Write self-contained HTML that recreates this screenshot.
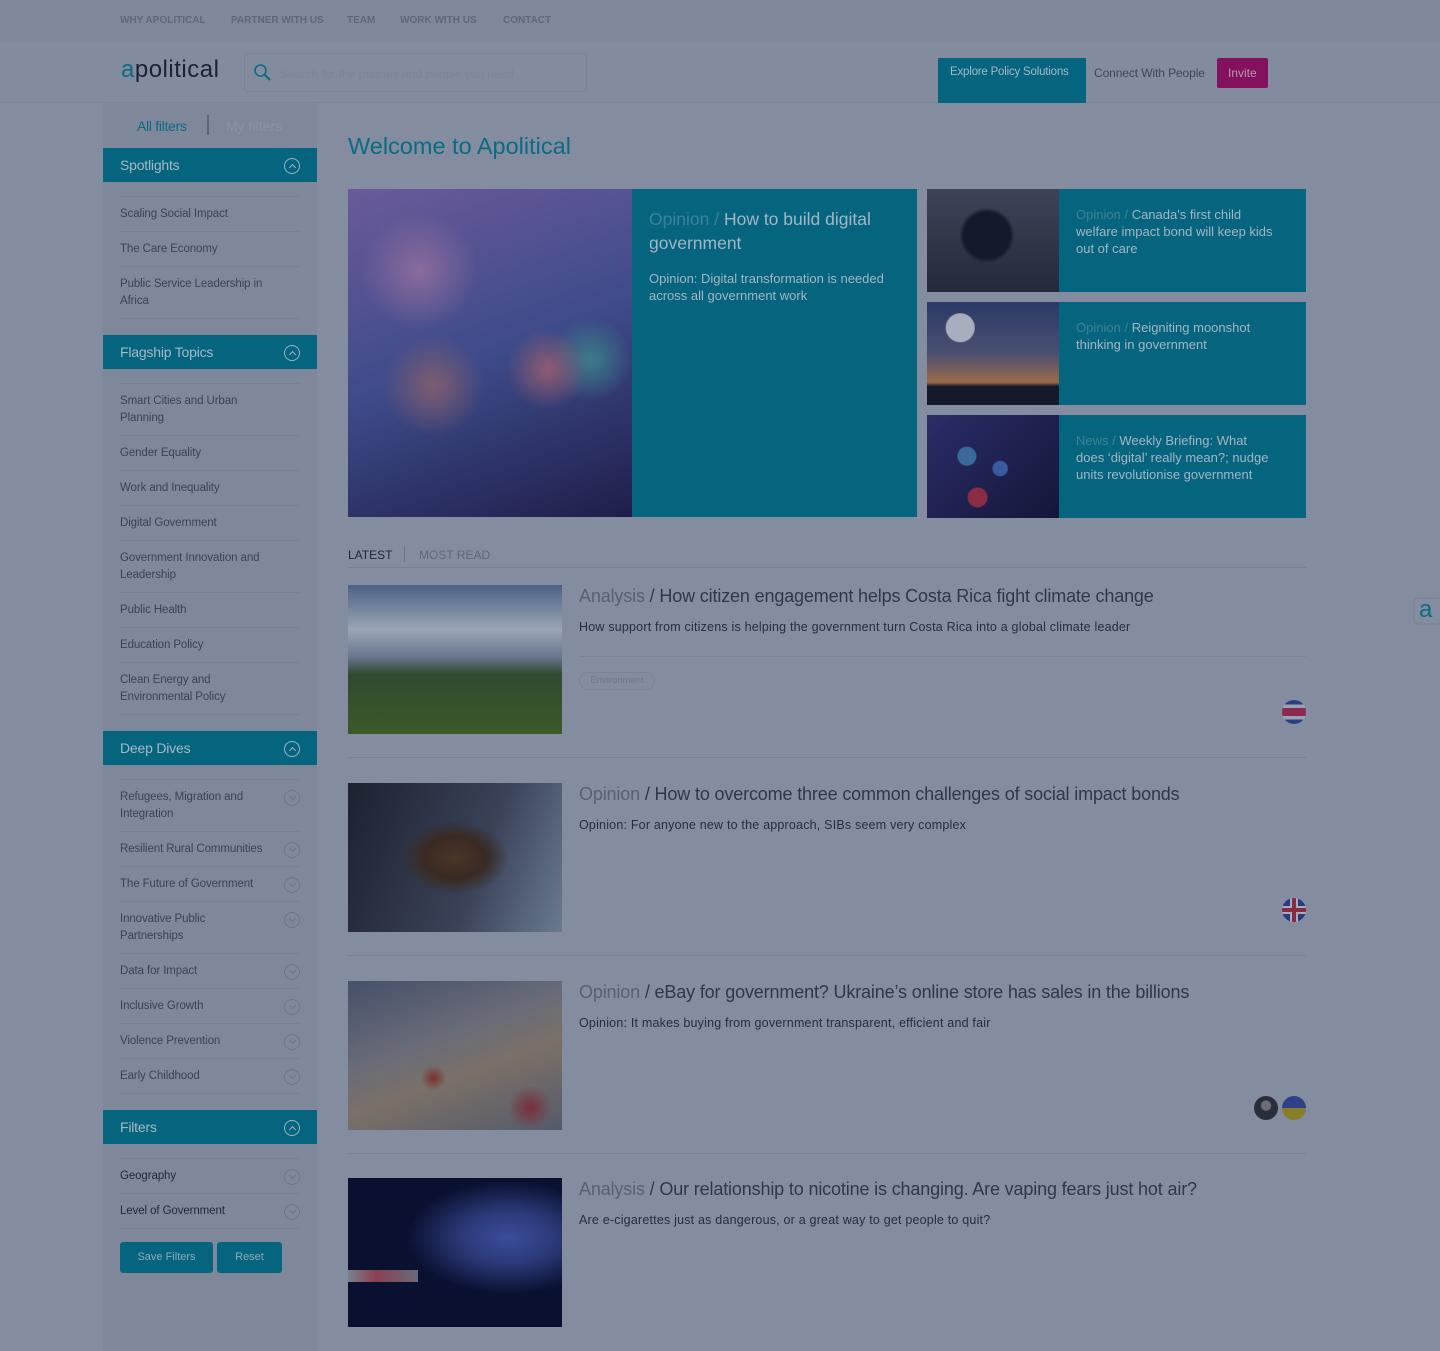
<!DOCTYPE html>
<html><head><meta charset="utf-8"><style>
*{box-sizing:border-box;margin:0;padding:0}
body{width:1440px;height:1351px;background:#848d9f;font-family:"Liberation Sans",sans-serif;color:#2c3447;position:relative;overflow:hidden}
.a{position:absolute}
.top{left:0;top:0;width:1440px;height:43px;background:#7f889a}
.top span{position:absolute;top:15px;font-size:10px;font-weight:bold;color:#5f687a}
.hdr{left:0;top:43px;width:1440px;height:60px;background:#838c9e;border-bottom:1px solid #7c8596}
.side{left:103px;top:103px;width:214px;height:1248px;background:#7f889b}
.sh{height:34px;background:#05657f;color:#a7b8c5;font-size:14px;padding:9px 17px;position:relative;letter-spacing:-0.2px}
.sh:after{content:"";position:absolute;right:17px;top:10px;width:14px;height:14px;border:1px solid #9fb2bf;border-radius:50%}
.sh:before{content:"";position:absolute;right:22px;top:17px;width:4px;height:4px;border-left:1px solid #9fb2bf;border-top:1px solid #9fb2bf;transform:rotate(45deg)}
.list{margin:14px 17px 16px 17px;border-top:1px solid #76808f}
.list div{font-size:11.5px;line-height:17px;padding:9px 0 8px;border-bottom:1px solid #76808f;color:#3a4255;position:relative;padding-right:20px;letter-spacing:-0.1px}
.list.c div:after{content:"";position:absolute;right:0;top:10px;width:14px;height:14px;border:1px solid #6c7586;border-radius:50%}
.list.c div:before{content:"";position:absolute;right:5px;top:14px;width:4px;height:4px;border-right:1px solid #6c7586;border-bottom:1px solid #6c7586;transform:rotate(45deg)}
.card{background:#05657f}
.cat{color:#3f8098}
.ct{color:#a4b5c3}
.art .t{position:absolute;left:231px;top:1px;font-size:18px;color:#2f374a;white-space:nowrap;letter-spacing:-0.15px}
.art .t b{font-weight:normal;color:#586174}
.art .s{position:absolute;left:231px;top:35px;font-size:12.5px;color:#252d3f;white-space:nowrap;letter-spacing:0.2px}
.img{position:absolute;left:0;top:0;width:214px;height:149px}
.line{height:1px;background:#78828f;position:absolute;left:348px;width:958px}
.flag{position:absolute;width:24px;height:24px;border-radius:50%}
</style></head><body>
<div class="a top">
<span style="left:120px">WHY APOLITICAL</span><span style="left:231px">PARTNER WITH US</span><span style="left:347px">TEAM</span><span style="left:400px">WORK WITH US</span><span style="left:503px">CONTACT</span>
</div>
<div class="a hdr">
<div class="a" style="left:121px;top:13px;font-size:24px;color:#1a2236;letter-spacing:0.5px"><span style="color:#0b6a84">a</span>political</div>
<div class="a" style="left:244px;top:10px;width:343px;height:39px;border:1px solid #7a8395;border-radius:3px"></div>
<svg class="a" style="left:253px;top:20px" width="20" height="20" viewBox="0 0 20 20"><circle cx="7.5" cy="7.5" r="5.5" fill="none" stroke="#0b6a84" stroke-width="1.6"/><path d="M11.5 11.5L17 17" stroke="#0b6a84" stroke-width="2.2"/></svg>
<div class="a" style="left:280px;top:24px;font-size:12px;color:#7b8597">Search for the policies and people you need</div>
<div class="a" style="left:938px;top:15px;width:148px;height:45px;background:#05657f;color:#a7b8c5;font-size:11.5px;padding:8px 0 0 12px;letter-spacing:-0.2px">Explore Policy Solutions</div>
<div class="a" style="left:1094px;top:23px;font-size:12px;color:#3e4759;letter-spacing:-0.1px">Connect With People</div>
<div class="a" style="left:1217px;top:15px;width:51px;height:30px;background:#84115e;border-radius:2px;color:#b59ab0;font-size:12px;padding:8px 0 0 11px">Invite</div>
</div>
<div class="a side">
<div style="height:45px;position:relative"><span class="a" style="left:34px;top:15px;font-size:14px;color:#0b6a84;letter-spacing:-0.3px">All filters</span><span class="a" style="left:104px;top:12px;width:2px;height:20px;background:#5d6678"></span><span class="a" style="left:123px;top:15px;font-size:14px;color:#8a93a4">My filters</span></div>
<div class="sh">Spotlights</div>
<div class="list"><div>Scaling Social Impact</div><div>The Care Economy</div><div>Public Service Leadership in Africa</div></div>
<div class="sh">Flagship Topics</div>
<div class="list"><div>Smart Cities and Urban Planning</div><div>Gender Equality</div><div>Work and Inequality</div><div>Digital Government</div><div>Government Innovation and Leadership</div><div>Public Health</div><div>Education Policy</div><div>Clean Energy and Environmental Policy</div></div>
<div class="sh">Deep Dives</div>
<div class="list c"><div>Refugees, Migration and<br>Integration</div><div>Resilient Rural Communities</div><div>The Future of Government</div><div>Innovative Public<br>Partnerships</div><div>Data for Impact</div><div>Inclusive Growth</div><div>Violence Prevention</div><div>Early Childhood</div></div>
<div class="sh">Filters</div>
<div class="list c" style="margin-bottom:13px"><div style="color:#1f2739">Geography</div><div style="color:#1f2739">Level of Government</div></div>
<div style="position:relative;height:31px"><div class="a" style="left:17px;top:0;width:93px;height:31px;background:#05657f;border-radius:3px;color:#8fa9b8;font-size:11px;text-align:center;line-height:31px">Save Filters</div><div class="a" style="left:114px;top:0;width:65px;height:31px;background:#05657f;border-radius:3px;color:#8fa9b8;font-size:11px;text-align:center;line-height:31px">Reset</div></div>
</div>

<div class="a" style="left:348px;top:133px;font-size:23.5px;color:#0b6a84;letter-spacing:0px">Welcome to Apolitical</div>

<div class="a" style="left:348px;top:189px;width:285px;height:328px;background:radial-gradient(circle at 25% 25%,#8a6b9c 0,transparent 18%),radial-gradient(circle at 70% 55%,#8f5d72 0,transparent 15%),radial-gradient(circle at 85% 52%,#3c7d8a 0,transparent 14%),radial-gradient(circle at 30% 60%,#7e5d70 0,transparent 18%),linear-gradient(160deg,#6a5a9a,#3e4b8a 50%,#1f1e4a)"></div>
<div class="a card" style="left:632px;top:189px;width:285px;height:328px;padding:18px 17px">
<div style="font-size:17.5px;line-height:24px;letter-spacing:0px"><span class="cat">Opinion</span> <span class="cat">/</span> <span class="ct">How to build digital government</span></div>
<div class="ct" style="font-size:13px;line-height:17px;margin-top:15px">Opinion: Digital transformation is needed across all government work</div></div>

<div class="a" style="left:927px;top:189px;width:133px;height:103px;background:radial-gradient(circle at 45% 45%,#14192c 0,#14192c 25%,transparent 30%),linear-gradient(#3e4457,#242a3c)"></div>
<div class="a card" style="left:1059px;top:189px;width:247px;height:103px;padding:17px 20px 17px 17px;font-size:13px;line-height:17px"><span class="cat">Opinion</span> <span class="cat">/</span> <span class="ct">Canada's first child<br>welfare impact bond will keep kids out of care</span></div>
<div class="a" style="left:927px;top:302px;width:133px;height:103px;background:radial-gradient(circle at 25% 25%,#a9aebe 0,#a9aebe 11%,transparent 12%),linear-gradient(#2b3a66,#4a4f70 50%,#9a6a48 78%,#141a2a 82%)"></div>
<div class="a card" style="left:1059px;top:302px;width:247px;height:103px;padding:17px 17px;font-size:13px;line-height:17px"><span class="cat">Opinion</span> <span class="cat">/</span> <span class="ct">Reigniting moonshot<br>thinking in government</span></div>
<div class="a" style="left:927px;top:415px;width:133px;height:103px;background:radial-gradient(circle at 38% 80%,#8a2d44 0,#8a2d44 8%,transparent 9%),radial-gradient(circle at 30% 40%,#3a6a9a 0,#3a6a9a 8%,transparent 9%),radial-gradient(circle at 55% 52%,#3a5aa0 0,#3a5aa0 8%,transparent 9%),linear-gradient(135deg,#2a2d68,#141638)"></div>
<div class="a card" style="left:1059px;top:415px;width:247px;height:103px;padding:17px 17px;font-size:13px;line-height:17px"><span class="cat">News</span> <span class="cat">/</span> <span class="ct">Weekly Briefing: What<br>does ‘digital’ really mean?; nudge<br>units revolutionise government</span></div>

<div class="a" style="left:348px;top:548px;font-size:12px;color:#1f2739">LATEST</div>
<div class="a" style="left:404px;top:546px;width:1px;height:16px;background:#6c7586"></div>
<div class="a" style="left:419px;top:548px;font-size:12px;color:#5f687a">MOST READ</div>
<div class="line" style="top:567px"></div>

<div class="a art" style="left:348px;top:585px;width:958px;height:150px">
<div class="img" style="background:linear-gradient(#4c6186 0,#9aa5b5 30%,#6a7590 48%,#2f4a30 60%,#3c5a28 100%)"></div>
<div class="t"><b>Analysis</b> / How citizen engagement helps Costa Rica fight climate change</div>
<div class="s">How support from citizens is helping the government turn Costa Rica into a global climate leader</div>
<div class="a" style="left:231px;top:71px;width:727px;height:1px;background:#7a8496"></div>
<div class="a" style="left:231px;top:87px;width:76px;height:18px;border:1px solid #7a8496;border-radius:9px;font-size:9.5px;color:#6d7688;text-align:center;line-height:16px">Environment</div>
<div class="flag" style="left:934px;top:115px;background:linear-gradient(#2a3f80 0 18%,#9aa1b2 18% 33%,#8b2a4e 33% 67%,#9aa1b2 67% 82%,#2a3f80 82%)"></div>
</div>
<div class="line" style="top:757px"></div>

<div class="a art" style="left:348px;top:783px;width:958px;height:150px">
<div class="img" style="background:radial-gradient(ellipse at 50% 50%,#4a3528 0,#3a2a22 20%,transparent 35%),linear-gradient(110deg,#1d2230,#3a4258 60%,#6a7a90)"></div>
<div class="t"><b>Opinion</b> / How to overcome three common challenges of social impact bonds</div>
<div class="s">Opinion: For anyone new to the approach, SIBs seem very complex</div>
<div class="flag" style="left:934px;top:115px;background:linear-gradient(#8a2a40,#8a2a40) 50% 0/4px 100% no-repeat,linear-gradient(#8a2a40,#8a2a40) 0 50%/100% 4px no-repeat,linear-gradient(#a5acbb,#a5acbb) 50% 0/8px 100% no-repeat,linear-gradient(#a5acbb,#a5acbb) 0 50%/100% 8px no-repeat,#2a3a80"></div>
</div>
<div class="line" style="top:955px"></div>

<div class="a art" style="left:348px;top:981px;width:958px;height:150px">
<div class="img" style="background:radial-gradient(circle at 40% 65%,#7a3030 0,transparent 8%),radial-gradient(circle at 85% 85%,#7a2e3a 0,transparent 10%),linear-gradient(160deg,#45506a,#6a6c78 40%,#7a7068 60%,#555a6a)"></div>
<div class="t"><b>Opinion</b> / eBay for government? Ukraine’s online store has sales in the billions</div>
<div class="s">Opinion: It makes buying from government transparent, efficient and fair</div>
<div class="flag" style="left:906px;top:115px;background:radial-gradient(circle at 50% 40%,#6a6c78 0,#6a6c78 25%,#2a2e3a 30%)"></div>
<div class="flag" style="left:934px;top:115px;background:linear-gradient(#2f3f8a 50%,#8a7d2a 50%)"></div>
</div>
<div class="line" style="top:1153px"></div>

<div class="a art" style="left:348px;top:1178px;width:958px;height:150px">
<div class="img" style="background:radial-gradient(ellipse at 75% 40%,#3a4d9a 0,#2c3a7a 20%,transparent 45%),linear-gradient(#0a1030,#0a1030)"></div>
<div class="a" style="left:0;top:92px;width:70px;height:12px;background:linear-gradient(90deg,#7a8090,#8a4050 40%,#6a6a7a)"></div>
<div class="t"><b>Analysis</b> / Our relationship to nicotine is changing. Are vaping fears just hot air?</div>
<div class="s">Are e-cigarettes just as dangerous, or a great way to get people to quit?</div>
</div>

<div class="a" style="left:1413px;top:597px;width:30px;height:28px;border:2px solid #7c8698;border-radius:5px;background:#848d9f;color:#0b6a84;font-size:24px;line-height:22px;padding-left:4px">a</div>
</body></html>
